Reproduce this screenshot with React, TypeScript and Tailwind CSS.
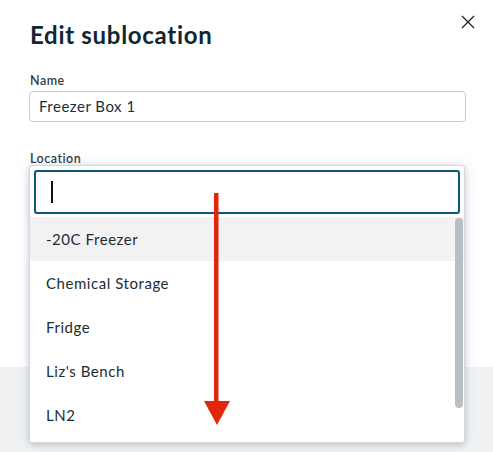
import React from "react";

const options = ["-20C Freezer", "Chemical Storage", "Fridge", "Liz's Bench", "LN2"];

export default function App() {
  return (
    <div
      className="relative w-[493px] h-[452px] overflow-hidden bg-white text-[#1d2d33]"
      style={{ fontFamily: "Lato, 'Open Sans', sans-serif" }}
    >
      <div className="flex flex-col h-full">
        <div className="px-[30px] pt-[19px]">
          <div className="h-[32px] flex items-center text-[24px] font-bold text-[#0f2731] tracking-[0.7px]">
            Edit sublocation
          </div>
          <div className="mt-[22px] text-[12.5px] font-semibold leading-[16px] tracking-[0.5px] text-[#333d42]">Name</div>
          <div className="mt-[2px] -ml-[1px] w-[437px] h-[31px] rounded-[4px] border border-[#c8cbcd] flex items-center pl-[9px] text-[15px] tracking-[0.5px]">
            Freezer Box 1
          </div>
          <div className="mt-[29px] text-[12.5px] font-semibold leading-[16px] tracking-[0.5px] text-[#333d42]">Location</div>
          <div className="h-[40px]" />
        </div>
        <div className="flex-1" />
        <div className="h-[85px] bg-[#f0f2f2]" />
      </div>

      {/* close */}
      <svg className="absolute left-[461px] top-[15px]" width="14" height="14" viewBox="0 0 14 14">
        <path d="M1 1 L13 13 M13 1 L1 13" stroke="#222" strokeWidth="1.3" />
      </svg>

      {/* dropdown menu overlay */}
      <div className="absolute left-[29px] top-[165px] w-[436px] h-[278px] bg-white rounded-[3px] border border-[#d6d8da] shadow-[0_2px_6px_rgba(0,0,0,0.15),0_0_14px_rgba(90,140,200,0.18)] flex flex-col">
        <div className="mx-[4px] mt-[4px] h-[44px] rounded-[3px] border-2 border-[#0d5676] flex items-center pl-[15px]">
          <div className="w-[2px] h-[22px] bg-[#111]" />
        </div>
        <div className="relative mt-[3px] flex flex-col">
          {options.map((o, i) => (
            <div
              key={o}
              className={`h-[44px] flex items-center pl-[16px] text-[15px] tracking-[0.55px] ${i === 0 ? "bg-[#f2f2f2]" : ""}`}
            >
              {o}
            </div>
          ))}
          <div className="absolute right-[1px] top-[1px] w-[8px] h-[190px] rounded-full bg-[#b9bec3]" />
        </div>
      </div>

      {/* red arrow */}
      <svg className="absolute left-[200px] top-[193px]" width="34" height="234" viewBox="0 0 34 234">
        <rect x="14" y="0" width="4.5" height="210" fill="#e0270a" />
        <polygon points="4,208 30,208 17,232" fill="#e0270a" />
      </svg>
    </div>
  );
}
